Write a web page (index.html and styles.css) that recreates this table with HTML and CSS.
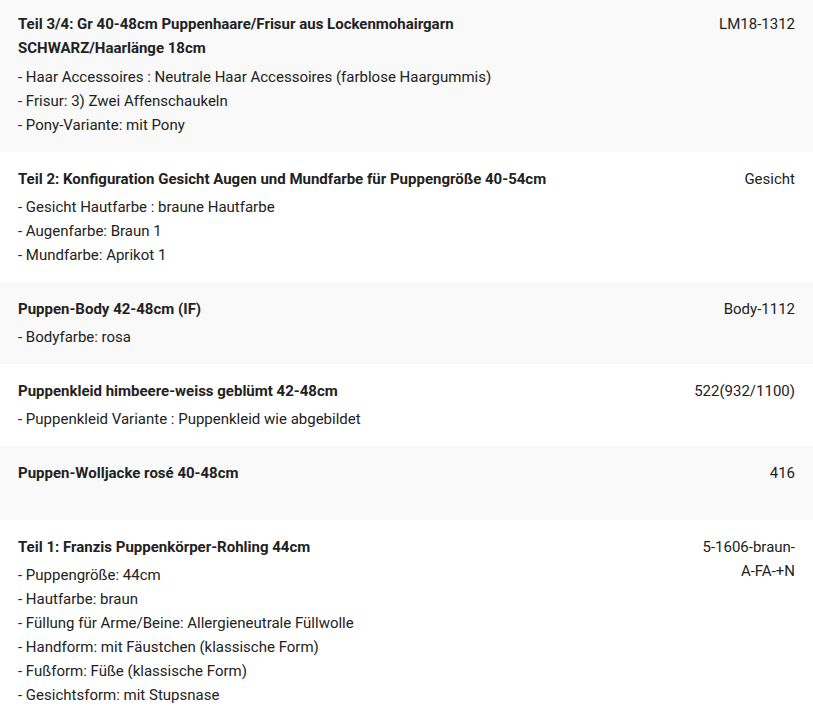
FILE: index.html
```html
<!DOCTYPE html>
<html lang="de">
<head>
<meta charset="utf-8">
<title>Positionen</title>
<link rel="stylesheet" href="styles.css">
</head>
<body>
<div class="items">
  <div class="row alt first">
    <div class="desc">
      <div class="title">Teil 3/4: Gr 40-48cm Puppenhaare/Frisur aus Lockenmohairgarn SCHWARZ/Haarlänge 18cm</div>
      <div class="opts">
        <div>- Haar Accessoires : Neutrale Haar Accessoires (farblose Haargummis)</div>
        <div>- Frisur: 3) Zwei Affenschaukeln</div>
        <div>- Pony-Variante: mit Pony</div>
      </div>
    </div>
    <div class="sku">LM18-1312</div>
  </div>
  <div class="row">
    <div class="desc">
      <div class="title">Teil 2: Konfiguration Gesicht Augen und Mundfarbe für Puppengröße 40-54cm</div>
      <div class="opts">
        <div>- Gesicht Hautfarbe : braune Hautfarbe</div>
        <div>- Augenfarbe: Braun 1</div>
        <div>- Mundfarbe: Aprikot 1</div>
      </div>
    </div>
    <div class="sku">Gesicht</div>
  </div>
  <div class="row alt">
    <div class="desc">
      <div class="title">Puppen-Body 42-48cm (IF)</div>
      <div class="opts">
        <div>- Bodyfarbe: rosa</div>
      </div>
    </div>
    <div class="sku">Body-1112</div>
  </div>
  <div class="row">
    <div class="desc">
      <div class="title">Puppenkleid himbeere-weiss geblümt 42-48cm</div>
      <div class="opts">
        <div>- Puppenkleid Variante : Puppenkleid wie abgebildet</div>
      </div>
    </div>
    <div class="sku">522(932/1100)</div>
  </div>
  <div class="row alt">
    <div class="desc">
      <div class="title">Puppen-Wolljacke rosé 40-48cm</div>
      <div class="opts empty"></div>
    </div>
    <div class="sku">416</div>
  </div>
  <div class="row">
    <div class="desc">
      <div class="title">Teil 1: Franzis Puppenkörper-Rohling 44cm</div>
      <div class="opts">
        <div>- Puppengröße: 44cm</div>
        <div>- Hautfarbe: braun</div>
        <div>- Füllung für Arme/Beine: Allergieneutrale Füllwolle</div>
        <div>- Handform: mit Fäustchen (klassische Form)</div>
        <div>- Fußform: Füße (klassische Form)</div>
        <div>- Gesichtsform: mit Stupsnase</div>
      </div>
    </div>
    <div class="sku">5-1606-braun-A-FA-+N</div>
  </div>
</div>
</body>
</html>
```

FILE: styles.css
```css
html, body {
  margin: 0;
  padding: 0;
  background: #ffffff;
}

body {
  font-family: Roboto, "Liberation Sans", Arial, sans-serif;
  font-size: 15px;
  line-height: 24px;
  color: #222222;
}

.items {
  display: flex;
  flex-direction: column;
}

.row {
  display: flex;
  justify-content: space-between;
  align-items: flex-start;
  padding: 15px 18px 15px 18px;
}

.row.first {
  padding-top: 12px;
  padding-bottom: 15px;
}

.row.first .opts {
  margin-top: 5px;
}

.row.alt {
  background: #f9f9f9;
}

.desc {
  width: 550px;
}

.title {
  font-weight: 700;
}

.opts {
  margin-top: 4px;
}

.opts.empty {
  height: 16px;
}

.sku {
  width: 104px;
  text-align: right;
}
```
